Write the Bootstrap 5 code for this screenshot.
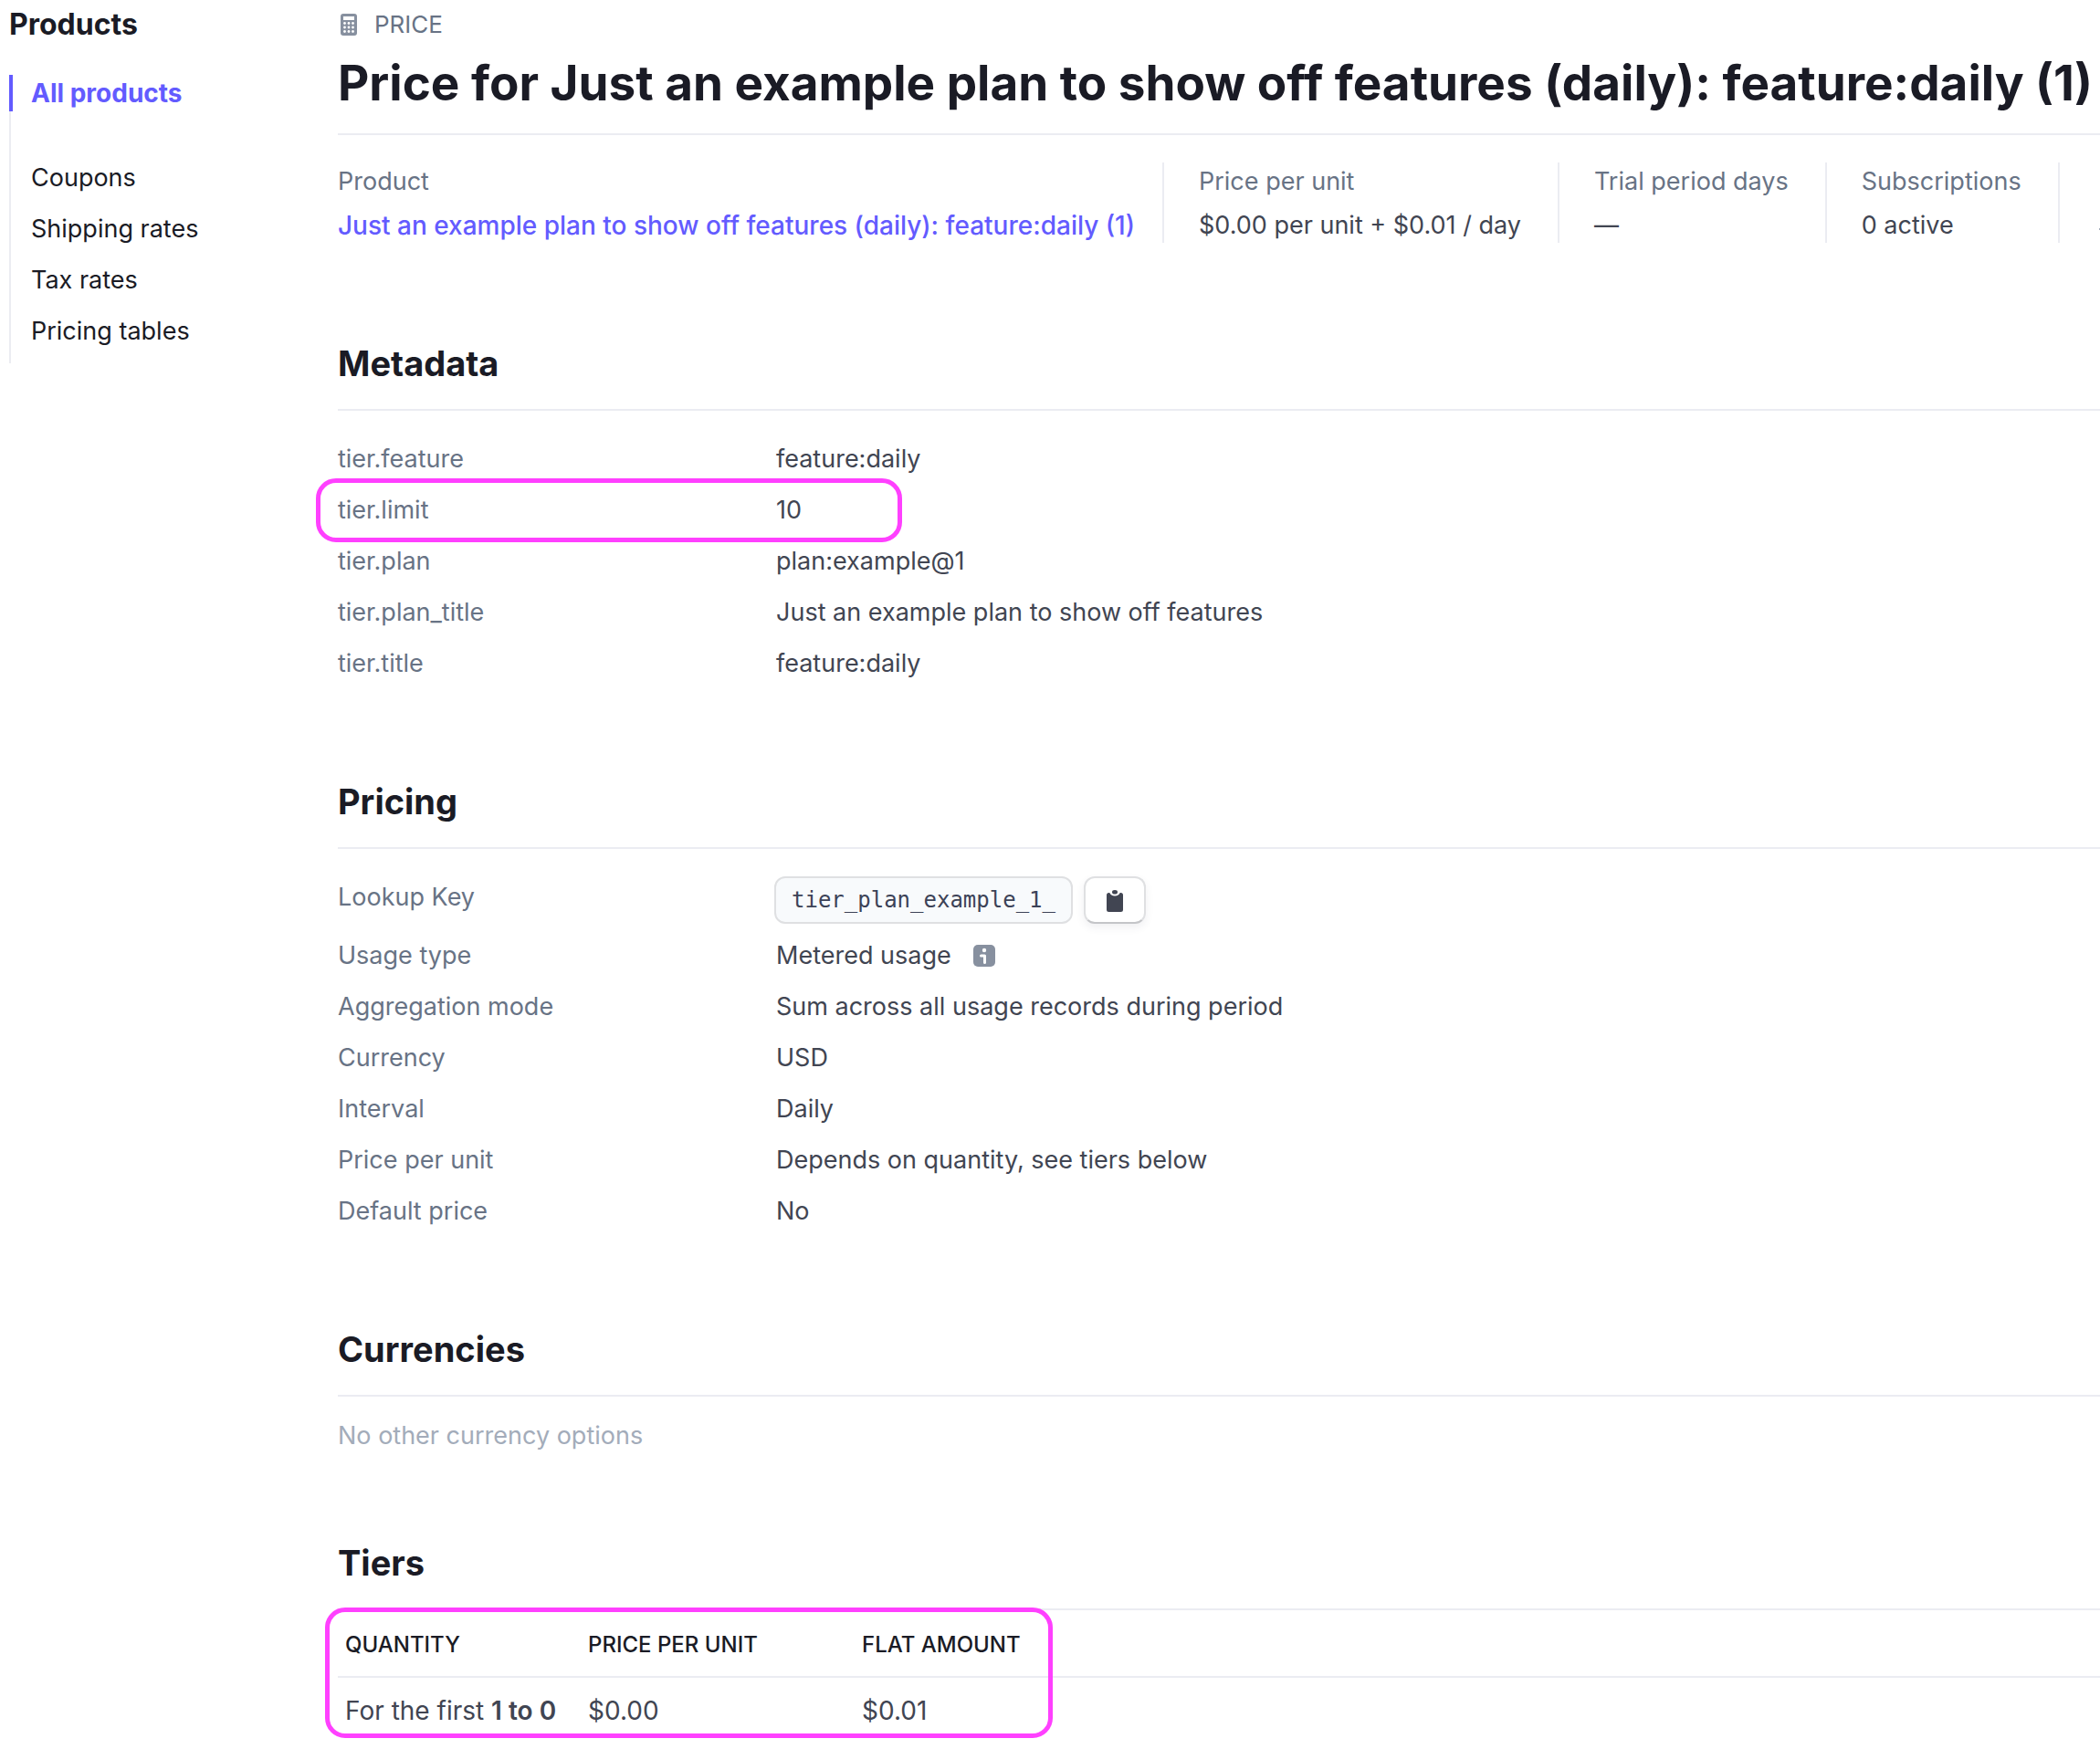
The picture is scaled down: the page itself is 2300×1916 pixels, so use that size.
<!DOCTYPE html>
<html lang="en">
<head>
<meta charset="utf-8">
<meta name="viewport" content="width=device-width, initial-scale=1">
<title>Price for Just an example plan</title>
<link href="https://cdn.jsdelivr.net/npm/bootstrap@5.3.0/dist/css/bootstrap.min.css" rel="stylesheet">
<style>
  :root { --ink:#1a1b25; --text:#414552; --muted:#687385; --faint:#a3acba; --rule:#ebecf2; --brand:#635bff; --mark:#ff40ff; }
  body { font-family: Inter, "Liberation Sans", sans-serif; font-size: 27px; line-height: 42px; color: var(--text); background: #fff; overflow-x: hidden; }
  a { text-decoration: none; }
  .side { width: 370px; padding: 6px 0 0 10px; }
  .side-title { font-size: 32px; line-height: 42px; font-weight: 700; color: var(--ink); margin: 0 0 34px; }
  .side-nav { border-left: 2px solid var(--rule); padding-bottom: 14px; }
  .side-nav a { display: block; color: var(--ink); padding-left: 22px; margin-bottom: 14px; }
  .side-nav li:last-child a { margin-bottom: 0; }
  .side-nav a.active { font-size: 28px; line-height: 40px; color: var(--brand); font-weight: 700; border-left: 4px solid var(--brand); margin: 0 0 52px -2px; padding-left: 20px; }
  .main-col { min-width: 0; }
  .eyebrow { font-size: 26px; line-height: 40px; color: var(--muted); padding-top: 7px; gap: 16px; }
  .page-title { font-size: 53px; line-height: 72px; font-weight: 700; color: var(--ink); white-space: nowrap; margin: 8px 0 0; padding-bottom: 19px; border-bottom: 2px solid var(--rule); }
  .facts { margin: 30px 0 104px; }
  .facts > div { flex: none; padding: 0 40px 0 38px; border-left: 2px solid var(--rule); height: 88px; white-space: nowrap; }
  .facts > div:first-child { width: 903px; padding: 0; border-left: 0; }
  .facts > div:last-child { padding-right: 0; }
  .facts dt { font-weight: 400; color: var(--muted); margin-bottom: 6px; }
  .facts dd { margin: 0; }
  .facts a { font-size: 28px; color: var(--brand); font-weight: 500; }
  .next-fact { width: 1px; height: 2px; margin-top: 72px; background: var(--faint); }
  .sect { margin-bottom: 102px; }
  .sect-title { font-size: 38px; line-height: 56px; font-weight: 700; color: var(--ink); margin: 0; padding-bottom: 22px; border-bottom: 2px solid var(--rule); }
  .props { margin: 32px 0 0; display: grid; grid-template-columns: 480px 1fr; row-gap: 14px; }
  .props dt { font-weight: 400; color: var(--muted); }
  .props dd { margin: 0; }
  .marked { position: relative; }
  .marked::before { content: ""; position: absolute; border: 5px solid var(--mark); border-radius: 22px; pointer-events: none; }
  .mark-row::before { left: -24px; top: -14px; width: 642px; height: 70px; }
  .mark-table::before { left: -14px; top: -3px; width: 797px; height: 143px; }
  .props .lookup { gap: 12px; margin: -2px 0 0 -2px; }
  .key-box { font-family: "DejaVu Sans Mono", monospace; font-size: 24px; line-height: 48px; height: 52px; padding: 0 17px; color: #3c4257; background: #f8fafc; border: 2px solid #dfe0e2; border-radius: 12px; }
  .copy-btn { width: 68px; height: 52px; padding: 0; background: #fff; border: 2px solid #dfe0e2; border-bottom-color: #c4c5c8; border-radius: 12px; box-shadow: 0 4px 10px rgba(60,66,87,.08); }
  .empty-note { color: var(--faint); margin: 22px 0 -12px; }
  .sect:last-child { margin-bottom: 0; }
  .tiers { width: 100%; }
  .tiers th { font-size: 24px; line-height: 36px; font-weight: 500; color: var(--ink); padding: 20px 8px 16px; border-bottom: 2px solid var(--rule); }
  .tiers td { font-size: 28px; padding: 15px 8px 20px; white-space: nowrap; }
  .tiers strong { font-weight: 600; }
  .col-qty { width: 266px; }
  .col-unit { width: 300px; }
</style>
</head>
<body>
<div class="d-flex">
  <aside class="side flex-shrink-0">
    <h2 class="side-title">Products</h2>
    <ul class="side-nav list-unstyled mb-0">
      <li><a class="active" href="#">All products</a></li>
      <li><a href="#">Coupons</a></li>
      <li><a href="#">Shipping rates</a></li>
      <li><a href="#">Tax rates</a></li>
      <li><a href="#">Pricing tables</a></li>
    </ul>
  </aside>
  <main class="main-col flex-grow-1">
    <div class="eyebrow d-flex align-items-center">
      <svg width="24" height="24" viewBox="0 0 24 24" aria-hidden="true">
        <rect x="3" width="18" height="24" rx="3" fill="#87909f"/>
        <rect x="6" y="3" width="12" height="4" fill="#fff"/>
        <g fill="#fff"><circle cx="7.5" cy="10.5" r="1.4"/><circle cx="12" cy="10.5" r="1.4"/><circle cx="16.5" cy="10.5" r="1.4"/><circle cx="7.5" cy="15" r="1.4"/><circle cx="12" cy="15" r="1.4"/><circle cx="16.5" cy="15" r="1.4"/><circle cx="7.5" cy="19.5" r="1.4"/><circle cx="12" cy="19.5" r="1.4"/><circle cx="16.5" cy="19.5" r="1.4"/></g>
      </svg>
      <span>PRICE</span>
    </div>
    <h1 class="page-title">Price for Just an example plan to show off features (daily): feature:daily (1)</h1>
    <dl class="facts d-flex">
      <div><dt>Product</dt><dd><a href="#">Just an example plan to show off features (daily): feature:daily (1)</a></dd></div>
      <div><dt>Price per unit</dt><dd>$0.00 per unit + $0.01 / day</dd></div>
      <div><dt>Trial period days</dt><dd>—</dd></div>
      <div><dt>Subscriptions</dt><dd>0 active</dd></div>
      <div class="flex-fill d-flex justify-content-end"><span class="next-fact"></span></div>
    </dl>

    <section class="sect">
      <h2 class="sect-title">Metadata</h2>
      <dl class="props">
        <dt>tier.feature</dt><dd>feature:daily</dd>
        <dt class="marked mark-row">tier.limit</dt><dd>10</dd>
        <dt>tier.plan</dt><dd>plan:example@1</dd>
        <dt>tier.plan_title</dt><dd>Just an example plan to show off features</dd>
        <dt>tier.title</dt><dd>feature:daily</dd>
      </dl>
    </section>

    <section class="sect">
      <h2 class="sect-title">Pricing</h2>
      <dl class="props">
        <dt>Lookup Key</dt>
        <dd class="lookup d-flex">
          <span class="key-box">tier_plan_example_1_</span>
          <button type="button" class="btn copy-btn d-flex align-items-center justify-content-center" aria-label="Copy lookup key">
            <svg width="24" height="28" viewBox="0 -3 24 28" aria-hidden="true">
              <path d="M3 5.500Q3 3 5.500 3H6.300A6 5 0 0 0 17.700 3H18.500Q21 3 21 5.500V21.500Q21 24 18.500 24H5.500Q3 24 3 21.500Z" fill="#414552"/>
              <ellipse cx="12" cy="2.300" rx="3" ry="2.300" fill="#414552"/>
            </svg>
          </button>
        </dd>
        <dt>Usage type</dt>
        <dd class="d-flex align-items-center gap-4">Metered usage
          <svg width="24" height="24" viewBox="0 0 24 24" role="img" aria-label="Info">
            <rect width="24" height="24" rx="5" fill="#87909f"/>
            <circle cx="12" cy="6" r="2.2" fill="#fff"/>
            <path d="M8.500 12H12.500V19.500" fill="none" stroke="#fff" stroke-width="3" stroke-linecap="round" stroke-linejoin="round"/>
          </svg>
        </dd>
        <dt>Aggregation mode</dt><dd>Sum across all usage records during period</dd>
        <dt>Currency</dt><dd>USD</dd>
        <dt>Interval</dt><dd>Daily</dd>
        <dt>Price per unit</dt><dd>Depends on quantity, see tiers below</dd>
        <dt>Default price</dt><dd>No</dd>
      </dl>
    </section>

    <section class="sect">
      <h2 class="sect-title">Currencies</h2>
      <p class="empty-note">No other currency options</p>
    </section>

    <section class="sect">
      <h2 class="sect-title">Tiers</h2>
      <div class="marked mark-table">
        <table class="tiers">
          <thead><tr><th class="col-qty">QUANTITY</th><th class="col-unit">PRICE PER UNIT</th><th>FLAT AMOUNT</th></tr></thead>
          <tbody><tr><td>For the first <strong>1 to 0</strong></td><td>$0.00</td><td>$0.01</td></tr></tbody>
        </table>
      </div>
    </section>
  </main>
</div>
<script src="https://cdn.jsdelivr.net/npm/bootstrap@5.3.0/dist/js/bootstrap.bundle.min.js"></script>
</body>
</html>
